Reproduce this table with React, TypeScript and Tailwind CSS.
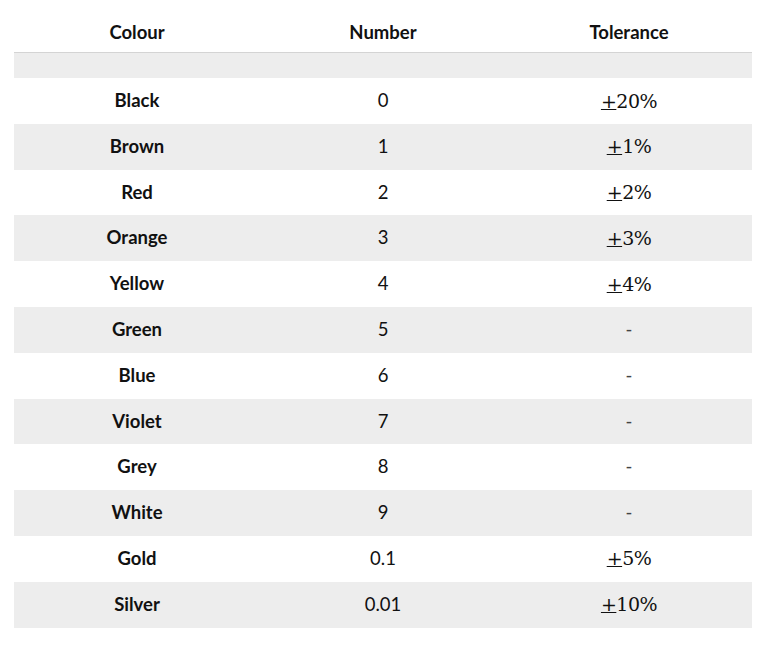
const rows: [string, string, string][] = [
  ["Black", "0", "±20%"],
  ["Brown", "1", "±1%"],
  ["Red", "2", "±2%"],
  ["Orange", "3", "±3%"],
  ["Yellow", "4", "±4%"],
  ["Green", "5", "-"],
  ["Blue", "6", "-"],
  ["Violet", "7", "-"],
  ["Grey", "8", "-"],
  ["White", "9", "-"],
  ["Gold", "0.1", "±5%"],
  ["Silver", "0.01", "±10%"],
];

export default function App() {
  return (
    <div className="w-[768px] h-[645px] bg-white pt-[14px] pl-[14px] font-['Lato','Open_Sans',sans-serif] text-[18.5px] text-[#111]">
      <div className="w-[738px]">
        <div className="grid grid-cols-3 h-[39px] items-center border-b border-[#d4d4d4] font-bold text-center">
          <div>Colour</div>
          <div>Number</div>
          <div>Tolerance</div>
        </div>
        <div className="h-[25px] bg-[#ededed]" />
        {rows.map(([name, num, tol], i) => (
          <div
            key={name}
            className={`grid grid-cols-3 h-[45.8px] items-center text-center ${i % 2 === 1 ? "bg-[#ededed]" : "bg-white"}`}
          >
            <div className="font-bold">{name}</div>
            <div>{num}</div>
            <div>
              {tol === "-" ? (
                <span className="text-[#444]">-</span>
              ) : (
                <span className="font-['DejaVu_Serif',serif] text-[19px] tracking-[-0.5px]" aria-label={tol}>
                  <span className="underline underline-offset-[1px]">+</span>
                  {tol.slice(1)}
                </span>
              )}
            </div>
          </div>
        ))}
      </div>
    </div>
  );
}
